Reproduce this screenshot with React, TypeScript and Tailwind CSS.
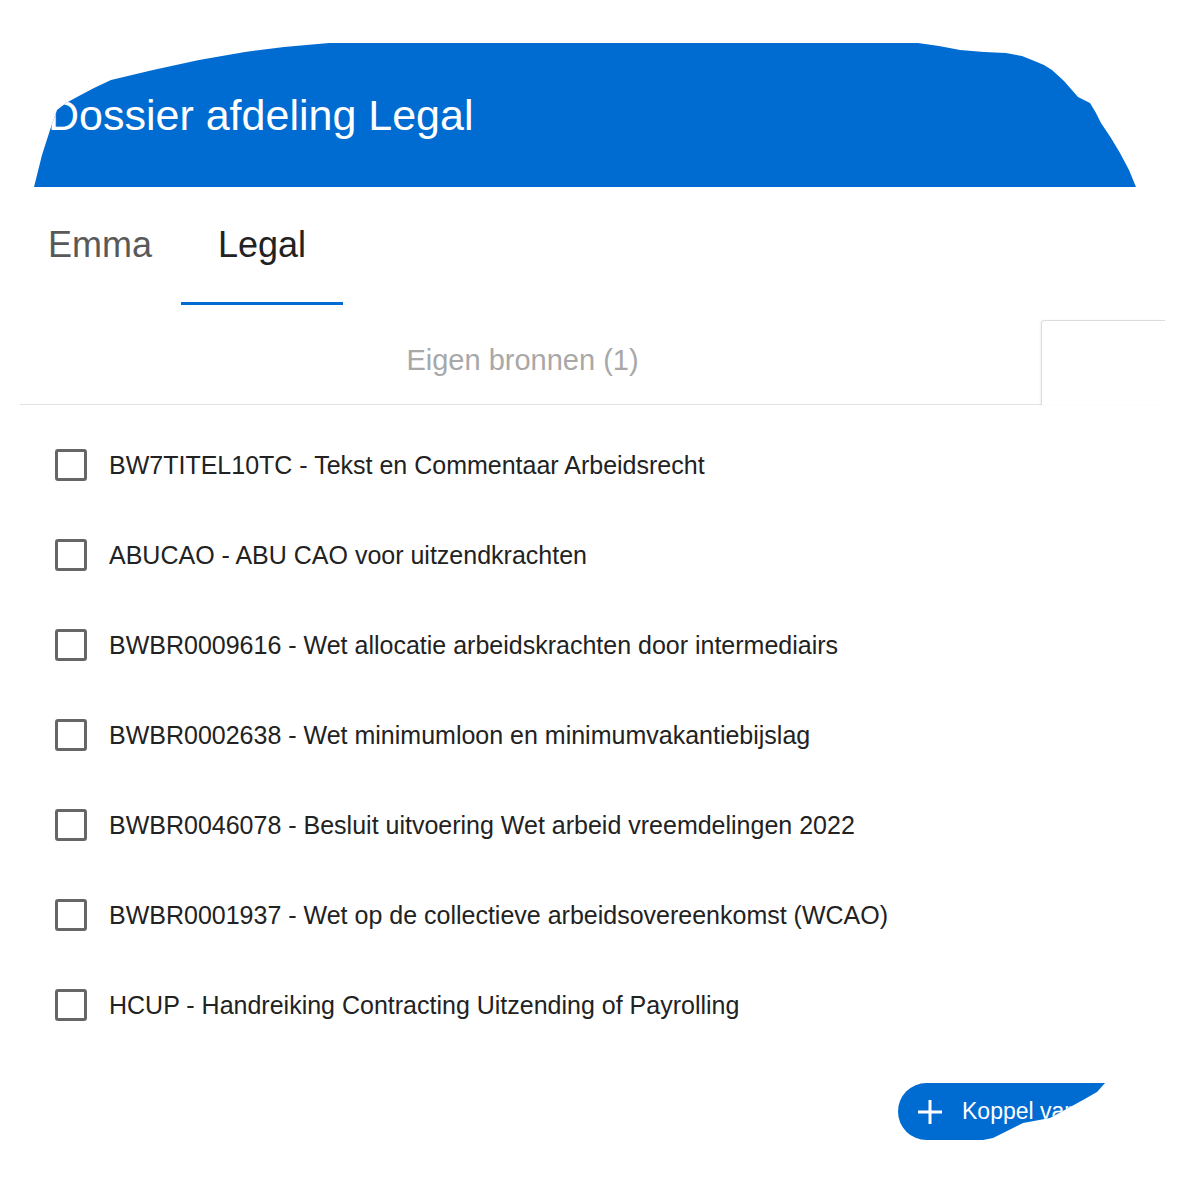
const sources = [
  "BW7TITEL10TC - Tekst en Commentaar Arbeidsrecht",
  "ABUCAO - ABU CAO voor uitzendkrachten",
  "BWBR0009616 - Wet allocatie arbeidskrachten door intermediairs",
  "BWBR0002638 - Wet minimumloon en minimumvakantiebijslag",
  "BWBR0046078 - Besluit uitvoering Wet arbeid vreemdelingen 2022",
  "BWBR0001937 - Wet op de collectieve arbeidsovereenkomst (WCAO)",
  "HCUP - Handreiking Contracting Uitzending of Payrolling",
];

export default function App() {
  return (
    <div className="h-[1200px] w-[1200px] overflow-hidden bg-white font-['Liberation_Sans',Arial,sans-serif]">
      {/* Header (torn edge) */}
      <header className="ml-[34px] mt-[43px] flex h-[144px] w-[1102px] items-center bg-[#006cd1] pl-[14px] [clip-path:polygon(0px_144px,8px_112px,16px_87px,23px_67px,32px_60px,43px_54px,60px_45px,77px_37px,119px_27px,165px_17px,211px_9px,250px_4px,295px_0px,884px_0px,905px_3px,926px_7px,950px_9px,972px_10px,988px_13px,998px_17px,1010px_22px,1018px_27px,1030px_38px,1044px_54px,1056px_60px,1062px_70px,1067px_80px,1077px_95px,1086px_110px,1095px_127px,1102px_144px)]">
        <h1 className="text-[43px] leading-none text-white">Dossier afdeling Legal</h1>
      </header>

      {/* Tabs */}
      <nav className="ml-[19px] flex">
        <div className="flex w-[162px] flex-col items-center pt-[40px]">
          <span className="text-[36px] leading-none text-[#595959]">Emma</span>
          <span className="mt-[39px] h-[3px] w-full" />
        </div>
        <div className="flex w-[162px] flex-col items-center pt-[40px]">
          <span className="text-[36px] leading-none text-[#222]">Legal</span>
          <span className="mt-[39px] h-[3px] w-full bg-[#006cd1]" />
        </div>
      </nav>

      {/* Sub tabs */}
      <div className="flex h-[100px]">
        <div className="ml-[20px] flex w-[1021px] justify-center border-b border-[#e2e2e2] pr-[16px] pt-[41px]">
          <span className="text-[29px] leading-none text-[#a8a8a8]">Eigen bronnen (1)</span>
        </div>
        <div className="mt-[15px] w-[124px] rounded-tl-[4px] border-l border-t border-[#dcdcdc] shadow-[-1px_0_2px_rgba(0,0,0,0.06)]" />
      </div>

      {/* Source list */}
      <ul className="flex flex-col pt-[15px]">
        {sources.map((s) => (
          <li key={s} className="flex h-[90px] items-center pl-[55px]">
            <span className="h-[32px] w-[32px] shrink-0 rounded-[3px] border-[3px] border-[#666]" />
            <span className="ml-[22px] whitespace-nowrap text-[25px] leading-none text-[#222]">{s}</span>
          </li>
        ))}
      </ul>

      <div className="mt-[33px] pl-[898px]">
        <button className="flex h-[57px] w-[212px] items-center overflow-hidden whitespace-nowrap rounded-l-full bg-[#006cd1] pl-[19px] text-white [clip-path:polygon(0px_0px,207px_0px,199px_9px,185px_17px,152px_35px,125px_40px,95px_55px,85px_57px,0px_57px)]">
          <svg className="shrink-0" width="26" height="26" viewBox="0 0 26 26">
            <path d="M13 1v24M1 13h24" stroke="white" strokeWidth="3" />
          </svg>
          <span className="ml-[19px] text-[23px] leading-none">Koppel van bron</span>
        </button>
      </div>
    </div>
  );
}
